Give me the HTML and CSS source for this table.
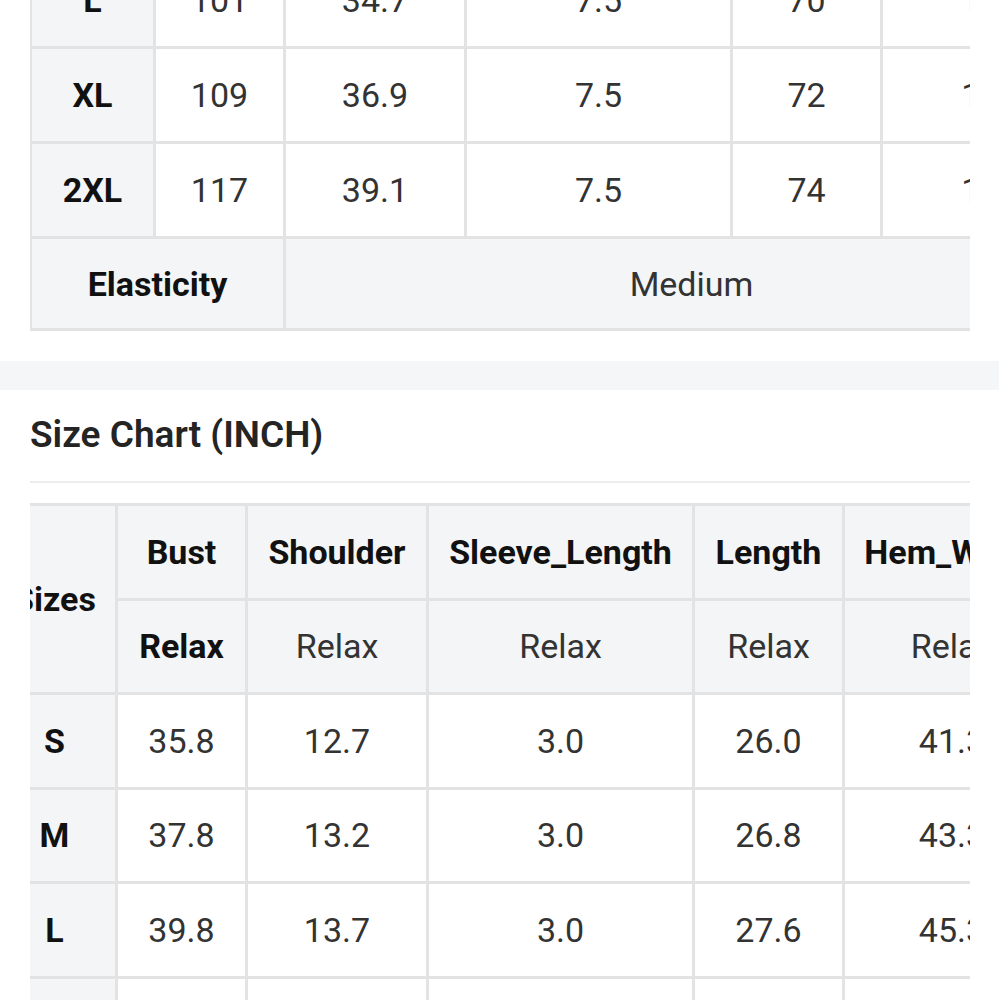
FILE: index.html
```html
<!DOCTYPE html>
<html lang="en">
<head>
<meta charset="utf-8">
<title>Size Chart</title>
<link rel="stylesheet" href="styles.css">
</head>
<body>
<div class="page">
  <section class="chart chart-cm">
    <h2 class="chart-title">Size Chart (CM)</h2>
    <div class="table-wrap">
      <table class="size-table">
        <colgroup>
          <col class="c-size"><col class="c-bust"><col class="c-shoulder"><col class="c-sleeve"><col class="c-length"><col class="c-hem">
        </colgroup>
        <thead>
          <tr>
            <th rowspan="2" class="head">Sizes</th>
            <th class="head">Bust</th>
            <th class="head">Shoulder</th>
            <th class="head">Sleeve_Length</th>
            <th class="head">Length</th>
            <th class="head">Hem_Width</th>
          </tr>
          <tr>
            <th class="head">Relax</th>
            <th class="head sub">Relax</th>
            <th class="head sub">Relax</th>
            <th class="head sub">Relax</th>
            <th class="head sub">Relax</th>
          </tr>
        </thead>
        <tbody>
          <tr><th class="size">S</th><td>91</td><td>32.3</td><td>7.5</td><td>66</td><td>105</td></tr>
          <tr><th class="size">M</th><td>96</td><td>33.5</td><td>7.5</td><td>68</td><td>110</td></tr>
          <tr><th class="size">L</th><td>101</td><td>34.7</td><td>7.5</td><td>70</td><td>115</td></tr>
          <tr><th class="size">XL</th><td>109</td><td>36.9</td><td>7.5</td><td>72</td><td>120</td></tr>
          <tr><th class="size">2XL</th><td>117</td><td>39.1</td><td>7.5</td><td>74</td><td>125</td></tr>
          <tr class="elastic"><th class="size" colspan="2">Elasticity</th><td class="medium" colspan="4">Medium</td></tr>
        </tbody>
      </table>
    </div>
  </section>

  <div class="band"></div>

  <section class="chart chart-inch">
    <h2 class="chart-title">Size Chart (INCH)</h2>
    <div class="table-wrap">
      <table class="size-table scrolled">
        <colgroup>
          <col class="c-size"><col class="c-bust"><col class="c-shoulder"><col class="c-sleeve"><col class="c-length"><col class="c-hem">
        </colgroup>
        <thead>
          <tr>
            <th rowspan="2" class="head">Sizes</th>
            <th class="head">Bust</th>
            <th class="head">Shoulder</th>
            <th class="head">Sleeve_Length</th>
            <th class="head">Length</th>
            <th class="head">Hem_Width</th>
          </tr>
          <tr>
            <th class="head">Relax</th>
            <th class="head sub">Relax</th>
            <th class="head sub">Relax</th>
            <th class="head sub">Relax</th>
            <th class="head sub">Relax</th>
          </tr>
        </thead>
        <tbody>
          <tr><th class="size">S</th><td>35.8</td><td>12.7</td><td>3.0</td><td>26.0</td><td>41.3</td></tr>
          <tr><th class="size">M</th><td>37.8</td><td>13.2</td><td>3.0</td><td>26.8</td><td>43.3</td></tr>
          <tr><th class="size">L</th><td>39.8</td><td>13.7</td><td>3.0</td><td>27.6</td><td>45.3</td></tr>
          <tr><th class="size">XL</th><td>42.9</td><td>14.5</td><td>3.0</td><td>28.3</td><td>47.2</td></tr>
          <tr><th class="size">2XL</th><td>46.1</td><td>15.4</td><td>3.0</td><td>29.1</td><td>49.2</td></tr>
          <tr class="elastic"><th class="size" colspan="2">Elasticity</th><td class="medium" colspan="4">Medium</td></tr>
        </tbody>
      </table>
    </div>
  </section>
</div>
</body>
</html>
```

FILE: styles.css
```css
* { box-sizing: border-box; }

html, body {
  margin: 0;
  padding: 0;
  background: #ffffff;
}

body {
  font-family: Roboto, "Noto Sans", "Liberation Sans", sans-serif;
  color: #333333;
  overflow: hidden;
}

.page {
  width: 999px;
}

.chart {
  padding: 0 29px 30px 30px;
}

.chart-cm {
  margin-top: -542px;
}

.chart-title {
  margin: 0;
  padding: 22px 0 23px;
  font-size: 37px;
  line-height: 46px;
  font-weight: 600;
  color: #242424;
  border-bottom: 2px solid #ececec;
}

.band {
  height: 29px;
  background: #f5f6f7;
}

.table-wrap {
  margin-top: 20px;
  width: 940px;
  overflow: hidden;
}

.size-table {
  table-layout: fixed;
  width: 1070px;
  border-collapse: separate;
  border-spacing: 0;
  border-top: 3px solid #e3e3e3;
  border-left: 2px solid #e3e3e3;
  font-size: 34px;
}

.size-table.scrolled {
  margin-left: -38px;
}

.c-size { width: 124px; }
.c-bust { width: 130px; }
.c-shoulder { width: 181px; }
.c-sleeve { width: 266px; }
.c-length { width: 150px; }
.c-hem { width: 217px; }

.size-table th,
.size-table td {
  height: 95px;
  padding: 0 8px;
  text-align: center;
  vertical-align: middle;
  white-space: nowrap;
  border-right: 3px solid #e3e3e3;
  border-bottom: 3px solid #e3e3e3;
  line-height: 40px;
}

.size-table.scrolled th,
.size-table.scrolled td {
  height: 94.5px;
}

.size-table td {
  font-weight: 400;
  color: #333333;
  background: #ffffff;
}

.size-table th {
  font-weight: 700;
  color: #111111;
  background: #f4f5f7;
}

.size-table th.sub {
  font-weight: 400;
  color: #333333;
}

.size-table .elastic th,
.size-table .elastic td {
  height: 92px;
}

.size-table td.medium {
  background: #f4f5f7;
  color: #333333;
}
```
